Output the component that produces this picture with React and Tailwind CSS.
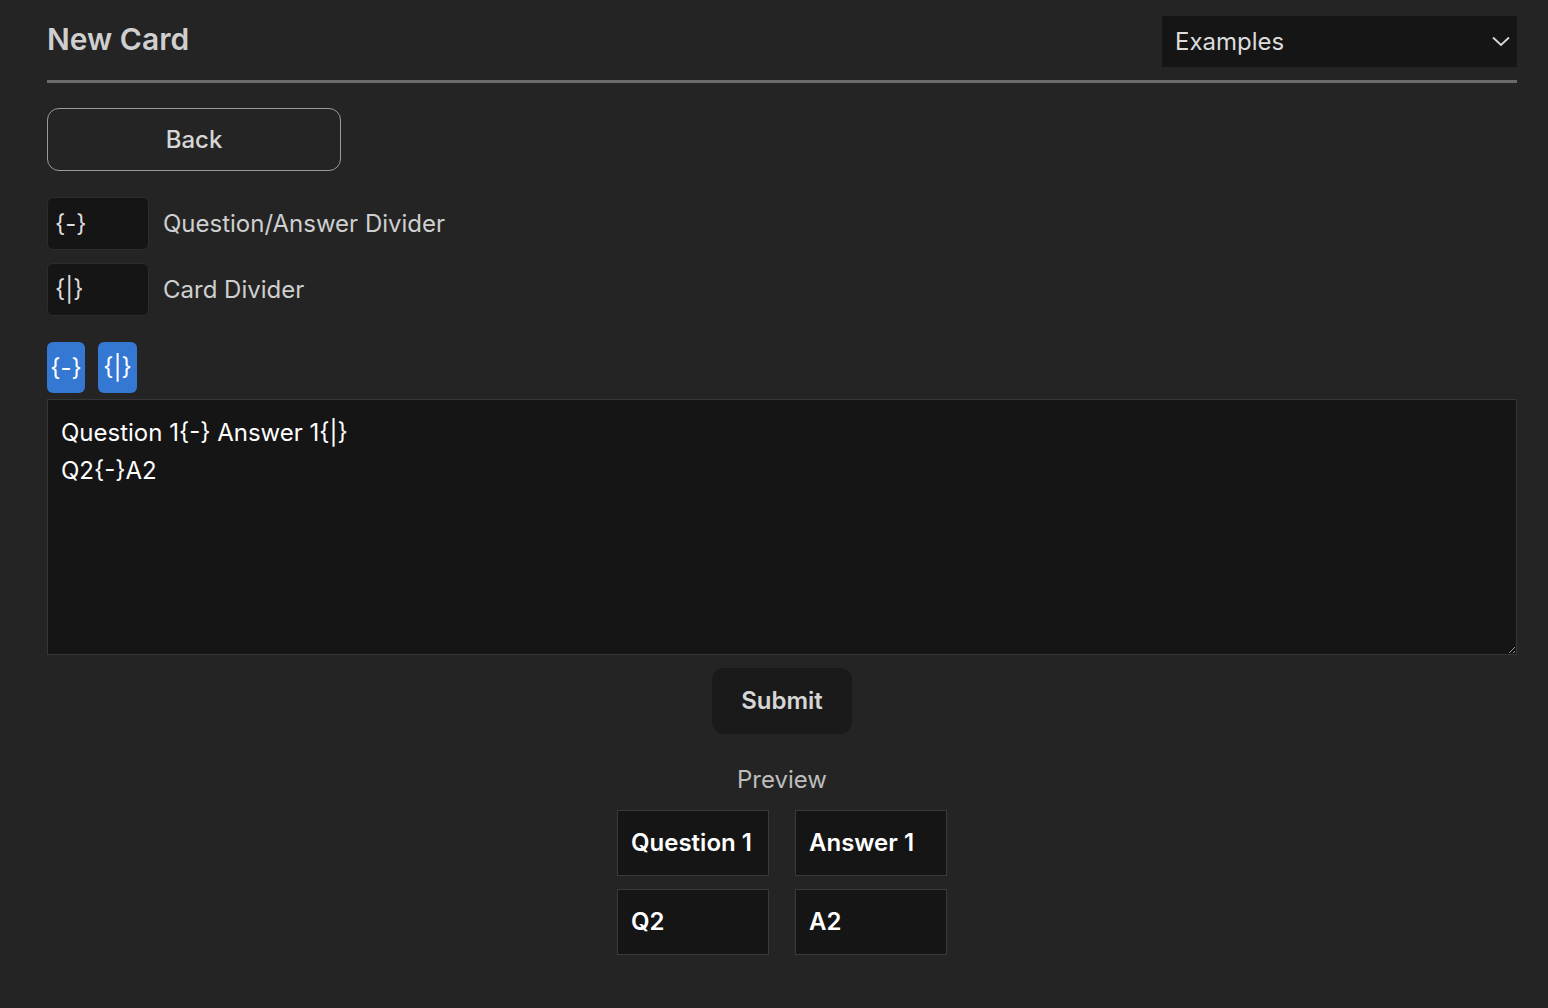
import React from 'react';

const font = { fontFamily: 'Inter, "Noto Sans", sans-serif' };

const DividerField = ({ value, label }) => (
  <div className="flex items-center gap-[14px]">
    <input
      readOnly
      value={value}
      className="w-[102px] h-[53px] rounded-md border border-[#2c2c2c] bg-[#151515] px-[7px] text-[24px] text-[#dcdcdc] outline-none"
    />
    <span className="text-[24px] text-[#cfcfcf]">{label}</span>
  </div>
);

const PreviewCell = ({ children }) => (
  <div className="w-[152px] h-[66px] flex items-center px-[13px] bg-[#151515] border border-[#3a3a3a] text-[24px] font-semibold text-white">
    {children}
  </div>
);

export default function App() {
  return (
    <div className="min-h-screen w-full bg-[#242424] pl-[47px] pr-[31px] pt-[16px]" style={font}>
      <div className="flex items-start justify-between">
        <h1 className="text-[30px] font-semibold text-[#cfcfcf] leading-none pt-[8px]">New Card</h1>
        <div className="w-[355px] h-[51px] bg-[#151515] flex items-center justify-between pl-[13px] pr-[7px]">
          <span className="text-[24px] text-[#dcdcdc]">Examples</span>
          <svg width="18" height="11" viewBox="0 0 18 11" fill="none">
            <path d="M1 1.5 L9 9 L17 1.5" stroke="#d8d8d8" strokeWidth="1.8" />
          </svg>
        </div>
      </div>
      <div className="mt-[13px] h-[3px] bg-[#6b6b6b]" />

      <button className="mt-[25px] w-[294px] h-[63px] rounded-xl border border-[#9a9a9a] text-[24px] font-medium text-[#d6d6d6]">
        Back
      </button>

      <div className="mt-[26px] flex flex-col gap-[13px]">
        <DividerField value="{-}" label="Question/Answer Divider" />
        <DividerField value="{|}" label="Card Divider" />
      </div>

      <div className="mt-[26px] flex gap-[13px]">
        <button className="w-[38px] h-[51px] rounded-md bg-[#3478d4] text-[24px] text-white">{'{-}'}</button>
        <button className="w-[39px] h-[51px] rounded-md bg-[#3478d4] text-[24px] text-white">{'{|}'}</button>
      </div>

      <textarea
        readOnly
        defaultValue={'Question 1{-} Answer 1{|}\nQ2{-}A2'}
        className="mt-[6px] block w-full h-[256px] bg-[#151515] border border-[#363636] px-[13px] py-[14px] text-[24px] leading-[38px] text-white outline-none"
        style={font}
      />

      <div className="flex flex-col items-center">
        <button className="mt-[13px] w-[140px] h-[66px] rounded-xl bg-[#1a1a1a] text-[24px] font-semibold text-[#d6d6d6]">
          Submit
        </button>
        <div className="mt-[28px] text-[24px] text-[#bdbdbd]">Preview</div>
        <div className="mt-[12px] grid grid-cols-2 gap-x-[26px] gap-y-[13px]">
          <PreviewCell>Question 1</PreviewCell>
          <PreviewCell>Answer 1</PreviewCell>
          <PreviewCell>Q2</PreviewCell>
          <PreviewCell>A2</PreviewCell>
        </div>
      </div>
    </div>
  );
}
